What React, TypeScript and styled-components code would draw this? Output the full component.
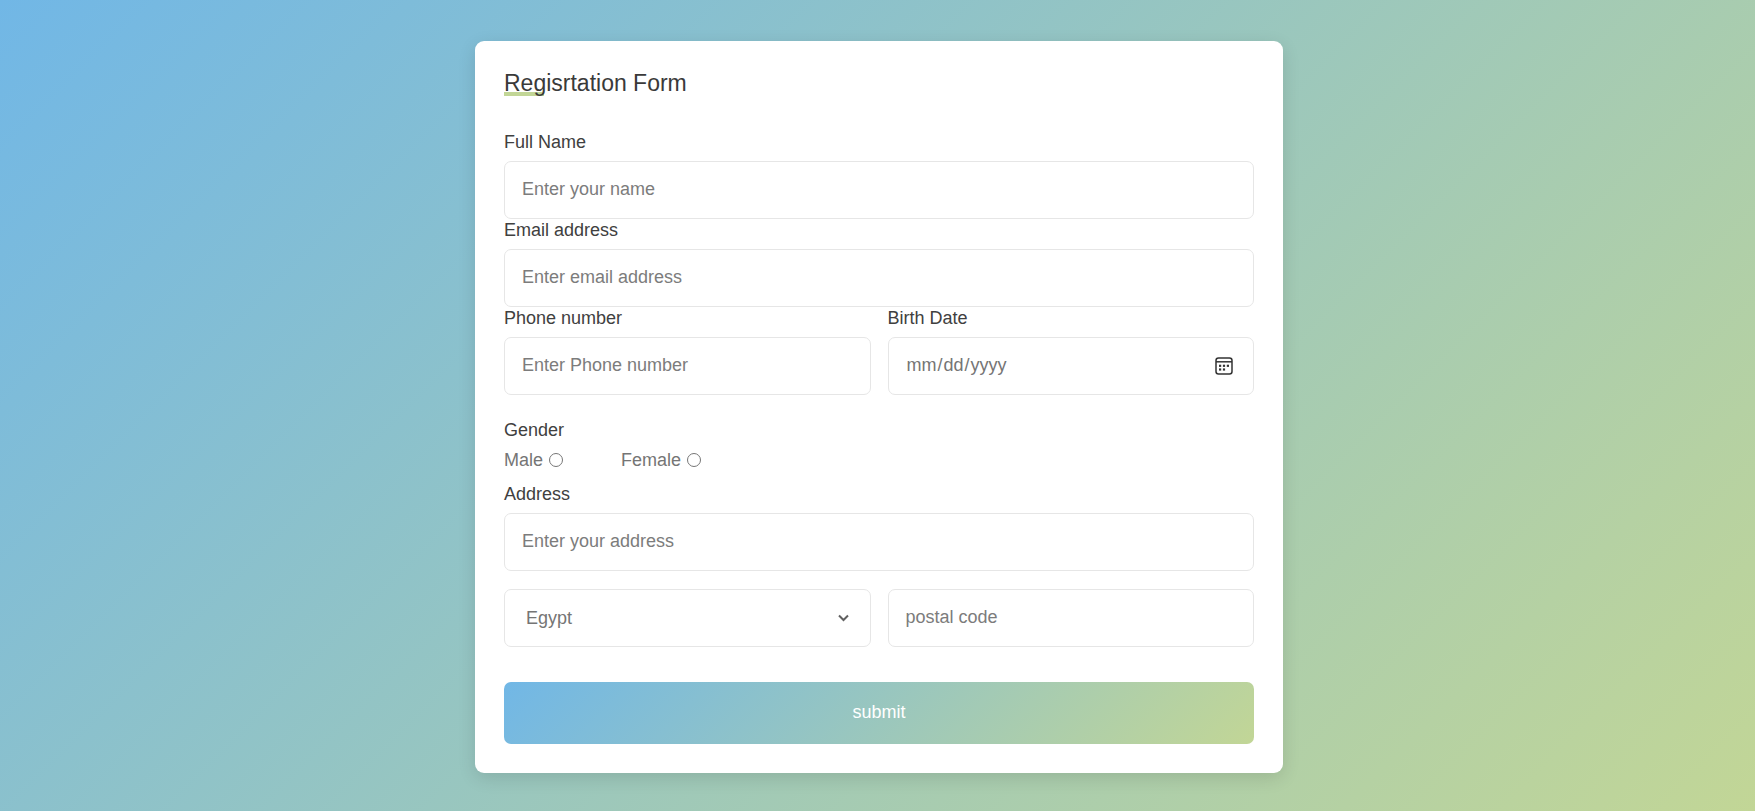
import React from "react";
import styled, { createGlobalStyle } from "styled-components";

const GlobalStyle = createGlobalStyle`
  *, *::before, *::after { box-sizing: border-box; margin: 0; padding: 0; }
  body { font-family: Arial, "Liberation Sans", sans-serif; }
`;

const Page = styled.main`
  min-height: 100vh;
  display: flex;
  align-items: center;
  justify-content: center;
  padding: 22px 20px 20px 23px;
  background: linear-gradient(135deg, #71b7e6, #c2d696);
`;

const Card = styled.section`
  width: 100%;
  max-width: 808px;
  padding: 29px;
  border-radius: 9px;
  background: #fff;
  box-shadow: 0 5px 18px rgba(0, 0, 0, 0.12);
`;

const Title = styled.h1`
  position: relative;
  z-index: 0;
  font-size: 23px;
  line-height: 26px;
  font-weight: 400;
  color: #3a3a3a;
  &::before {
    content: "";
    position: absolute;
    z-index: -1;
    left: 0;
    bottom: 0;
    width: 40px;
    height: 4px;
    background: #c2d696;
  }
`;

const Form = styled.form`
  margin-top: 35px;
`;

const Field = styled.div`
  flex: 1;
  min-width: 0;
`;

const Label = styled.label`
  display: block;
  font-size: 18px;
  line-height: 22px;
  color: #404040;
`;

const Input = styled.input`
  display: block;
  width: 100%;
  height: 58px;
  padding: 0 17px;
  border: 1px solid #e6e6e6;
  border-radius: 7px;
  outline: none;
  background: #fff;
  font: inherit;
  font-size: 18px;
  color: #757575;
  &::placeholder { color: #7c7c7c; }
  &::-webkit-calendar-picker-indicator { opacity: 0; }
  ${Label} + & { margin-top: 8px; }
`;

const Control = styled.div`
  position: relative;
  ${Label} + & { margin-top: 8px; }
`;

const ControlIcon = styled.svg`
  position: absolute;
  top: 50%;
  right: 20px;
  transform: translateY(-50%);
  pointer-events: none;
`;

const Row = styled.div`
  display: flex;
  gap: 17px;
`;

const AddressRow = styled(Row)`
  margin-top: 18px;
`;

const Gender = styled.fieldset`
  margin-top: 24px;
  border: 0;
`;

const Legend = styled.legend`
  font-size: 18px;
  line-height: 22px;
  color: #404040;
`;

const Choices = styled.div`
  display: flex;
  gap: 58px;
  padding: 8px 0 12px;
`;

const Choice = styled.label`
  display: flex;
  align-items: center;
  gap: 6px;
  font-size: 18px;
  line-height: 22px;
  color: #757575;
`;

const Radio = styled.input`
  width: 14px;
  height: 14px;
`;

const Select = styled.select`
  display: block;
  width: 100%;
  height: 58px;
  padding: 0 21px;
  border: 1px solid #e6e6e6;
  border-radius: 7px;
  appearance: none;
  background: #fff;
  font: inherit;
  font-size: 18px;
  color: #757575;
`;

const Submit = styled.button`
  display: block;
  width: 100%;
  height: 62px;
  margin-top: 35px;
  border: 0;
  border-radius: 7px;
  background: linear-gradient(135deg, #71b7e6, #c2d696);
  font: inherit;
  font-size: 18px;
  color: #fff;
  cursor: pointer;
`;

const CalendarIcon = () => (
  <ControlIcon width="19" height="18" viewBox="0 0 19 18" fill="none" aria-hidden="true">
    <rect x="1" y="1" width="16" height="16" rx="2.5" stroke="#333" strokeWidth="1.5" />
    <path d="M1 4.8h16" stroke="#333" strokeWidth="1.5" />
    <g fill="#333">
      <rect x="4" y="7.7" width="2.2" height="2.2" />
      <rect x="7.9" y="7.7" width="2.2" height="2.2" />
      <rect x="11.8" y="7.7" width="2.2" height="2.2" />
      <rect x="4" y="11.4" width="2.2" height="2.2" />
      <rect x="7.9" y="11.4" width="2.2" height="2.2" />
    </g>
  </ControlIcon>
);

const ChevronIcon = () => (
  <ControlIcon width="14" height="8" viewBox="0 0 14 8" fill="none" aria-hidden="true">
    <path d="M2 1.5L6.5 6L11 1.5" stroke="#606060" strokeWidth="2" />
  </ControlIcon>
);

export default function App() {
  return (
    <Page>
      <GlobalStyle />
      <Card>
        <Title>Regisrtation Form</Title>
        <Form>
          <Field>
            <Label htmlFor="name">Full Name</Label>
            <Input id="name" placeholder="Enter your name" />
          </Field>
          <Field>
            <Label htmlFor="email">Email address</Label>
            <Input id="email" type="email" placeholder="Enter email address" />
          </Field>
          <Row>
            <Field>
              <Label htmlFor="phone">Phone number</Label>
              <Input id="phone" type="tel" placeholder="Enter Phone number" />
            </Field>
            <Field>
              <Label htmlFor="birth">Birth Date</Label>
              <Control>
                <Input id="birth" type="date" />
                <CalendarIcon />
              </Control>
            </Field>
          </Row>
          <Gender>
            <Legend>Gender</Legend>
            <Choices>
              <Choice>Male <Radio type="radio" name="gender" value="male" /></Choice>
              <Choice>Female <Radio type="radio" name="gender" value="female" /></Choice>
            </Choices>
          </Gender>
          <Field>
            <Label htmlFor="address">Address</Label>
            <Input id="address" placeholder="Enter your address" />
          </Field>
          <AddressRow>
            <Field>
              <Control>
                <Select aria-label="Country">
                  <option>Egypt</option>
                </Select>
                <ChevronIcon />
              </Control>
            </Field>
            <Field>
              <Input aria-label="Postal code" placeholder="postal code" />
            </Field>
          </AddressRow>
          <Submit type="submit">submit</Submit>
        </Form>
      </Card>
    </Page>
  );
}
